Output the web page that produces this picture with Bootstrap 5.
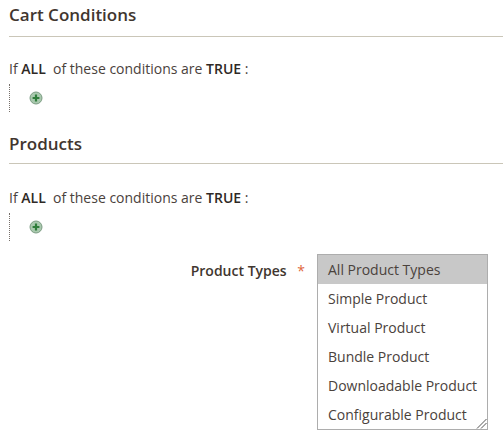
<!DOCTYPE html>
<html lang="en">
<head>
<meta charset="utf-8">
<title>Conditions</title>
<link href="https://cdn.jsdelivr.net/npm/bootstrap@5.3.0/dist/css/bootstrap.min.css" rel="stylesheet">
<style>
html, body { height: 443px; overflow: hidden; }
body { font-family: "Open Sans", sans-serif; font-size: 14px; color: #4a423c; background: #fff; padding-left: 9px; }
.sec-head { font-family: "Open Sans", sans-serif; font-size: 17px; font-weight: 600; line-height: 22px; color: #41362f; margin: 0; border-bottom: 1px solid #cac6b8; }
.head-one { padding: 4px 0 10px; height: 37px; }
.head-two { padding: 6px 0 9px; height: 37px; margin-top: 15px; }
.rule-line { line-height: 20px; margin: 24px 0 0; }
.rule-line b { font-weight: 600; color: #2f2925; }
.rule-one { margin-top: 22px; }
.rule-tree { border-left: 1px dotted #77706a; height: 28px; margin-top: 5px; padding-left: 19px; }
.add-ico { width: 14px; height: 14px; display: block; }
.type-row { margin-top: 13px; }
.type-label { font-weight: 600; width: 308px; padding-top: 7px; line-height: 20px; padding-right: 12px; color: #41362f; }
.req-star { color: #e0663a; margin-left: 7px; font-weight: 400; }
.type-list { width: 171px; height: 176px; border: 1px solid #adadad; position: relative; background: #fff; border-radius: 0; }
.type-item { height: 29px; line-height: 29px; padding: 0 10px; white-space: nowrap; border: 0; background: transparent; color: #4a423c; }
.type-item.chosen { background: #c8c8c8; }
.grip-ico { position: absolute; right: 0; bottom: 0; width: 11px; height: 11px; }
</style>
</head>
<body>
<h2 class="sec-head head-one">Cart Conditions</h2>
<p class="rule-line rule-one">If <b>ALL</b>&nbsp; of these conditions are <b>TRUE</b> :</p>
<div class="rule-tree d-flex align-items-center">
  <svg class="add-ico" viewBox="0 0 14 14"><circle cx="7" cy="7" r="6" fill="#a9c9ae" stroke="#7c9c83" stroke-width="1"/><path d="M7 3.6v6.8M3.6 7h6.8" stroke="#2f7d3b" stroke-width="2.2"/></svg>
</div>
<h2 class="sec-head head-two">Products</h2>
<p class="rule-line">If <b>ALL</b>&nbsp; of these conditions are <b>TRUE</b> :</p>
<div class="rule-tree d-flex align-items-center">
  <svg class="add-ico" viewBox="0 0 14 14"><circle cx="7" cy="7" r="6" fill="#a9c9ae" stroke="#7c9c83" stroke-width="1"/><path d="M7 3.6v6.8M3.6 7h6.8" stroke="#2f7d3b" stroke-width="2.2"/></svg>
</div>
<div class="type-row d-flex align-items-start">
  <div class="type-label text-end">Product Types <span class="req-star">*</span></div>
  <div class="type-list list-group">
    <div class="type-item chosen">All Product Types</div>
    <div class="type-item">Simple Product</div>
    <div class="type-item">Virtual Product</div>
    <div class="type-item">Bundle Product</div>
    <div class="type-item">Downloadable Product</div>
    <div class="type-item">Configurable Product</div>
    <svg class="grip-ico" viewBox="0 0 11 11"><path d="M1 10.5L10.5 1M5 10.5L10.5 5" stroke="#555" stroke-width="1" fill="none"/></svg>
  </div>
</div>
<script src="https://cdn.jsdelivr.net/npm/bootstrap@5.3.0/dist/js/bootstrap.bundle.min.js"></script>
</body>
</html>
